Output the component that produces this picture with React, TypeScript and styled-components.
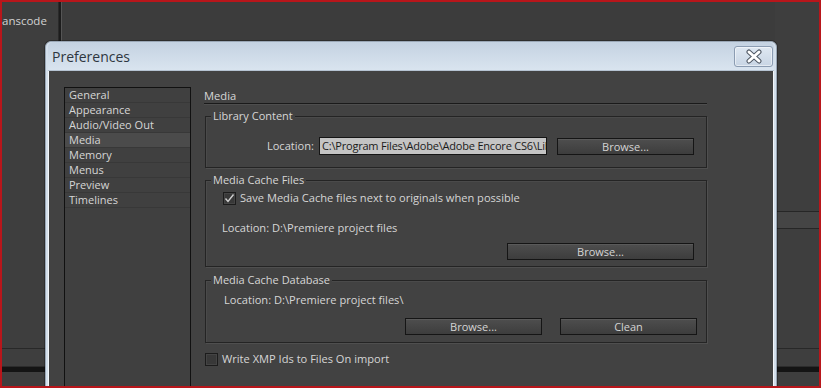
import styled, { createGlobalStyle } from "styled-components";

const Global = createGlobalStyle`
  html, body {
    margin: 0;
    padding: 0;
    background: #3c3c3c;
  }
  * {
    box-sizing: border-box;
  }
`

// app behind the dialog
const Screen = styled.div`
  position: relative;
  width: 821px;
  height: 388px;
  overflow: hidden;
  display: flex;
  border: 2px solid #b8161b;
  background: #3d3d3d;
  font-family: 'Open Sans', 'Liberation Sans', sans-serif;
`

const LeftPanel = styled.div`
  width: 56px;
  display: flex;
  flex-direction: column;
  background: #3e3e3e;
`

const TabLabel = styled.div`
  height: 36px;
  padding: 12px 0 0 0;
  white-space: nowrap;
  font-size: 11.5px;
  line-height: 14px;
  color: #d2d2d2;
`

const Splitter = styled.div`
  width: 4px;
  background: #1c1c1c;
  border-left: 1px solid #2a2a2a;
  border-right: 1px solid #555;
`

const CenterPanel = styled.div`
  flex: 1;
  background: #3c3c3c;
`

const RightPanel = styled.div`
  width: 44px;
  display: flex;
  flex-direction: column;
  background: #3e3e3e;
`

const Ledge = styled.div<{ $top: number }>`
  margin-top: ${p => p.$top}px;
  height: 18px;
  border-top: 1px solid #262626;
  border-bottom: 1px solid #262626;
  background: #454545;
`

const PanelFooter = styled.div`
  margin-top: auto;
  height: 38px;
  border-top: 1px solid #282828;
  padding-top: 17px;
`

const Strip = styled.div`
  height: 6px;
  background: #141414;
  border-top: 1px solid #2c2c2c;
`

// dialog window
const Dialog = styled.div`
  position: absolute;
  left: 43px;
  top: 39px;
  width: 732px;
  height: 380px;
  display: flex;
  flex-direction: column;
  border-radius: 6px 6px 0 0;
  border: 1px solid #9aa7b6;
  background: #d3dfeb;
  padding: 0 2px;
  box-shadow: 0 0 0 1px rgba(0,0,0,0.25);
`

const TitleBar = styled.div`
  height: 28px;
  display: flex;
  align-items: center;
  justify-content: space-between;
  padding: 0 0 0 4px;
  border-radius: 5px 5px 0 0;
  background: linear-gradient(#c4d2e1, #d9e4ef);
`

const Title = styled.div`
  font-family: 'Open Sans', 'Liberation Sans', sans-serif;
  font-size: 14px;
  color: #2e3640;
  margin-top: 1px;
`

const CloseButton = styled.div`
  width: 39px;
  height: 21px;
  margin: 1px 1px 0 0;
  display: flex;
  align-items: center;
  justify-content: center;
  border: 1px solid #8b9cb2;
  border-radius: 3px;
  background: linear-gradient(#dfe8f2, #c8d5e4);
  box-shadow: inset 0 0 0 1px rgba(255,255,255,0.5);
`

const Body = styled.div`
  flex: 1;
  display: flex;
  gap: 13px;
  padding: 16px 0 0 16px;
  background: #424242;
  border-top: 1px solid #b5c3d2;
  box-shadow: inset 1px 0 0 #f2f6fa, inset -1px 0 0 #f2f6fa;
`

const CategoryList = styled.ul`
  list-style: none;
  margin: 0;
  padding: 0;
  width: 127px;
  border: 1px solid #111;
  background: #404040;
`

const CategoryItem = styled.li<{ $selected?: boolean }>`
  height: 15px;
  padding-left: 4px;
  font-size: 11px;
  line-height: 14px;
  color: #d6d6d6;
  border-bottom: 1px solid #383838;
  background: ${p => (p.$selected ? '#4b4b4b' : 'transparent')};
`

const Content = styled.div`
  width: 503px;
  display: flex;
  flex-direction: column;
  padding-top: 2px;
`

const SectionHeader = styled.div`
  height: 15px;
  font-size: 11.2px;
  line-height: 14px;
  color: #d6d6d6;
  border-bottom: 1px solid #1a1a1a;
  box-shadow: 0 1px 0 #4e4e4e;
`

const Group = styled.div<{ $gap: number }>`
  position: relative;
  margin: ${p => p.$gap}px 0 0 1px;
  border: 1px solid #242424;
  box-shadow: 1px 1px 0 #4f4f4f, inset 1px 1px 0 #4a4a4a;
  display: flex;
  flex-direction: column;
`

const Legend = styled.div`
  position: absolute;
  left: 5px;
  top: -8px;
  padding: 0 2px;
  background: #424242;
  font-size: 11px;
  line-height: 14px;
  color: #d6d6d6;
`

const Row = styled.div<{ $pad: string; $justify?: string }>`
  display: flex;
  align-items: center;
  justify-content: ${p => p.$justify || 'flex-start'};
  padding: ${p => p.$pad};
`

const Label = styled.span`
  font-size: 11.1px;
  line-height: 14px;
  color: #d6d6d6;
  white-space: nowrap;
`

const PathField = styled.div`
  width: 228px;
  height: 18px;
  margin-left: 5px;
  padding-left: 2px;
  overflow: hidden;
  white-space: nowrap;
  border: 1px solid #151515;
  background: #c4c4c4;
  color: #1a1a1a;
  font-size: 11px;
  letter-spacing: -0.2px;
  line-height: 16px;
`

const Button = styled.div<{ $width: number; $ml?: number }>`
  width: ${p => p.$width}px;
  height: 17px;
  margin-left: ${p => p.$ml || 0}px;
  display: flex;
  align-items: center;
  justify-content: center;
  border: 1px solid #151515;
  background: linear-gradient(#4e4e4e, #3d3d3d);
  box-shadow: inset 0 1px 0 #5a5a5a;
  color: #d4d4d4;
  font-size: 11px;
`

const CheckRow = styled.label`
  display: flex;
  align-items: center;
  gap: 4px;
`

const Box = styled.span`
  width: 13px;
  height: 13px;
  display: flex;
  align-items: center;
  justify-content: center;
  border: 1px solid #1c1c1c;
  background: #383838;
  box-shadow: inset 0 0 0 1px #444;
`

function Check({ checked }: { checked: boolean }) {
  return (
    <Box>
      {checked && (
        <svg width="11" height="11" viewBox="0 0 11 11">
          <path d="M1.5 5.5 L4 8.5 L9.5 1.5" fill="none" stroke="#d0d0d0" strokeWidth="1.4" />
        </svg>
      )}
    </Box>
  )
}

const categories = ['General', 'Appearance', 'Audio/Video Out', 'Media', 'Memory', 'Menus', 'Preview', 'Timelines']

export default function App() {
  return (
    <>
      <Global />
      <Screen>
        <LeftPanel>
          <TabLabel>anscode</TabLabel>
          <PanelFooter><Strip /></PanelFooter>
        </LeftPanel>
        <Splitter />
        <CenterPanel />
        <RightPanel>
          <Ledge $top={209} />
          <PanelFooter><Strip /></PanelFooter>
        </RightPanel>

        <Dialog>
          <TitleBar>
            <Title>Preferences</Title>
            <CloseButton>
              <svg width="18" height="15" viewBox="0 0 18 15">
                <path d="M4 3 L14 12 M14 3 L4 12" stroke="#4f5864" strokeWidth="5" strokeLinecap="round" />
                <path d="M4 3 L14 12 M14 3 L4 12" stroke="#ffffff" strokeWidth="3" strokeLinecap="round" />
              </svg>
            </CloseButton>
          </TitleBar>
          <Body>
            <CategoryList>
              {categories.map(c => (
                <CategoryItem key={c} $selected={c === 'Media'}>{c}</CategoryItem>
              ))}
            </CategoryList>
            <Content>
              <SectionHeader>Media</SectionHeader>

              <Group $gap={12}>
                <Legend>Library Content</Legend>
                <Row $pad="20px 12px 12px 0" $justify="flex-end">
                  <Label>Location:</Label>
                  <PathField>C:\Program Files\Adobe\Adobe Encore CS6\Library</PathField>
                  <Button $width={137} $ml={10}>Browse...</Button>
                </Row>
              </Group>

              <Group $gap={12}>
                <Legend>Media Cache Files</Legend>
                <Row $pad="10px 0 0 17px">
                  <CheckRow>
                    <Check checked />
                    <Label>Save Media Cache files next to originals when possible</Label>
                  </CheckRow>
                </Row>
                <Row $pad="16px 0 0 16px">
                  <Label>Location: D:\Premiere project files</Label>
                </Row>
                <Row $pad="8px 12px 6px 0" $justify="flex-end">
                  <Button $width={187}>Browse...</Button>
                </Row>
              </Group>

              <Group $gap={13}>
                <Legend>Media Cache Database</Legend>
                <Row $pad="12px 0 0 18px">
                  <Label>Location: D:\Premiere project files\</Label>
                </Row>
                <Row $pad="11px 9px 7px 0" $justify="flex-end">
                  <Button $width={137}>Browse...</Button>
                  <Button $width={137} $ml={18}>Clean</Button>
                </Row>
              </Group>

              <Row $pad="9px 0 0 1px">
                <CheckRow>
                  <Check checked={false} />
                  <Label>Write XMP Ids to Files On import</Label>
                </CheckRow>
              </Row>
            </Content>
          </Body>
        </Dialog>
      </Screen>
    </>
  )
}
